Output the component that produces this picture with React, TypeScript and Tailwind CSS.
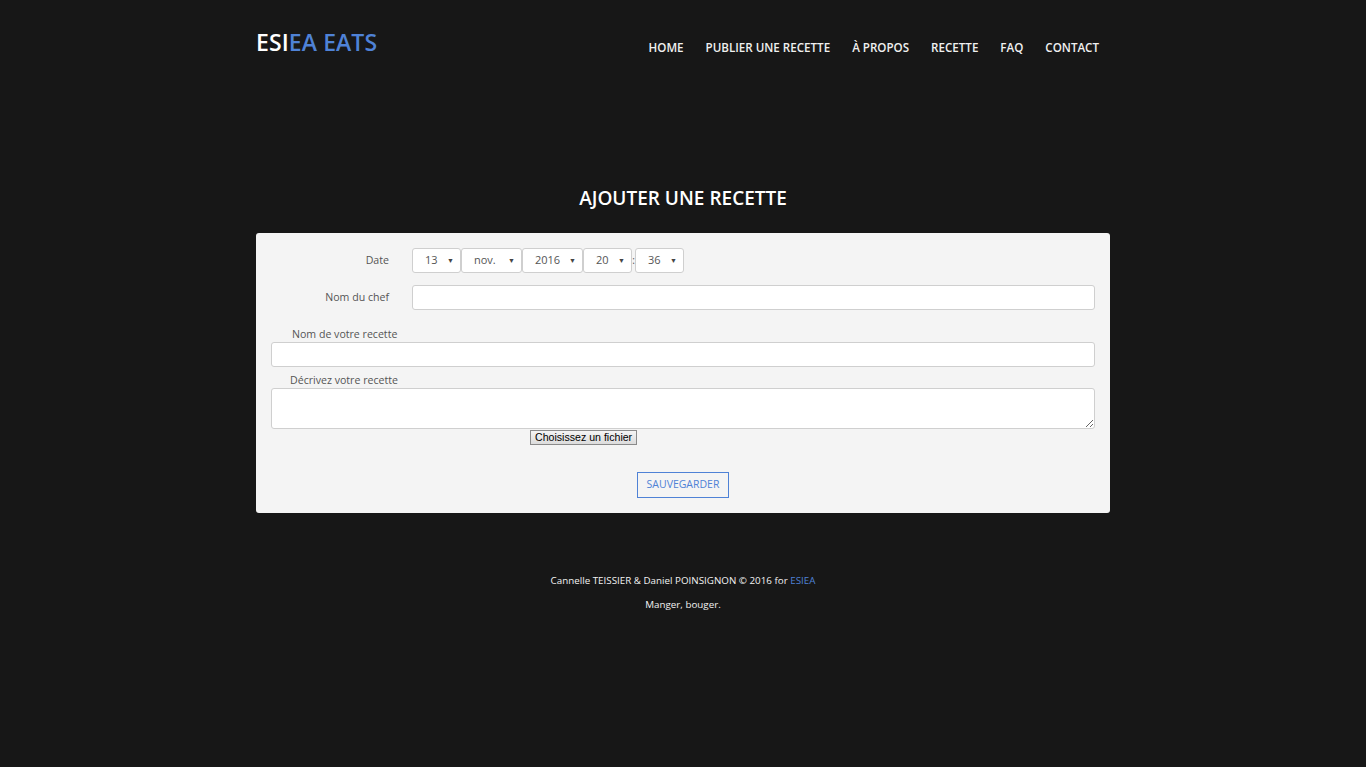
import React from 'react';

const navItems = ['HOME', 'PUBLIER UNE RECETTE', 'À PROPOS', 'RECETTE', 'FAQ', 'CONTACT'];

const FakeSelect = ({ value, width }: { value: string; width: string }) => (
    <div className={`relative flex h-[25px] items-center rounded-[3px] border border-[#cfcfcf] bg-white pl-[12px] text-[11px] text-[#555] ${width}`}>
        <span>{value}</span>
        <span className="absolute right-[6px] top-[7px] text-[7px] text-[#444]">▼</span>
    </div>
);

const App = () => {
    return (
        <div className="min-h-[767px] bg-[#171717] font-['Open_Sans',sans-serif]">
            <div className="mx-auto w-[854px]">
                {/* header */}
                <header className="flex items-start justify-between pt-[27px]">
                    <div className="text-[23px] font-semibold leading-[30px] tracking-[0.1px]">
                        <span className="text-white">ESI</span>
                        <span className="text-[#4f82d6]">EA EATS</span>
                    </div>
                    <nav className="mt-[12px] flex">
                        {navItems.map((item) => (
                            <a key={item} className="px-[11px] text-[11.6px] font-semibold leading-[18px] text-[#f0f0f0]">
                                {item}
                            </a>
                        ))}
                    </nav>
                </header>

                <h1 className="mt-[128px] text-center text-[19px] font-semibold leading-[26px] text-white">
                    AJOUTER UNE RECETTE
                </h1>

                {/* form */}
                <form className="mt-[22px] rounded-[3px] bg-[#f4f4f4] px-[15px] pt-[15px] pb-[15px]">
                    <div className="flex items-center">
                        <label className="w-[118px] text-right text-[10.6px] text-[#555]">Date</label>
                        <div className="ml-[23px] flex items-center">
                            <FakeSelect value="13" width="w-[49px]" />
                            <FakeSelect value="nov." width="w-[61px]" />
                            <FakeSelect value="2016" width="w-[61px]" />
                            <FakeSelect value="20" width="w-[49px]" />
                            <span className="w-[3px] text-center text-[10px] text-[#555]">:</span>
                            <FakeSelect value="36" width="w-[49px]" />
                        </div>
                    </div>
                    <div className="mt-[12px] flex items-center">
                        <label className="w-[118px] text-right text-[10.6px] text-[#555]">Nom du chef</label>
                        <input className="ml-[23px] h-[25px] flex-1 rounded-[3px] border border-[#cfcfcf] bg-white outline-none" />
                    </div>

                    <label className="mt-[17px] block pl-[21px] text-[10.6px] leading-[15px] text-[#555]">Nom de votre recette</label>
                    <input className="block h-[25px] w-full rounded-[3px] border border-[#cfcfcf] bg-white outline-none" />

                    <label className="mt-[6px] block pl-[19px] text-[10.6px] leading-[15px] text-[#555]">Décrivez votre recette</label>
                    <textarea className="block h-[41px] w-full resize-y rounded-[3px] border border-[#cfcfcf] bg-white outline-none" />

                    <div className="mt-[1px] flex pl-[259px]">
                        <button type="button" className="h-[15px] border border-[#8a8a8a] bg-gradient-to-b from-[#f4f4f4] to-[#dcdcdc] px-[4px] font-['Liberation_Sans',sans-serif] text-[10.6px] leading-[13px] text-black">
                            Choisissez un fichier
                        </button>
                    </div>

                    <div className="mt-[27px] flex justify-center">
                        <button type="button" className="h-[26px] w-[92px] border border-[#4f82d6] bg-transparent text-[10.5px] text-[#4f82d6]">
                            SAUVEGARDER
                        </button>
                    </div>
                </form>

                {/* footer */}
                <footer className="mt-[61px] text-center text-[9.8px] leading-[14px] text-[#f2f2f2]">
                    <p>
                        Cannelle TEISSIER &amp; Daniel POINSIGNON © 2016 for <a className="text-[#4f82d6]">ESIEA</a>
                    </p>
                    <p className="mt-[10px]">Manger, bouger.</p>
                </footer>
            </div>
        </div>
    );
};

export default App;
